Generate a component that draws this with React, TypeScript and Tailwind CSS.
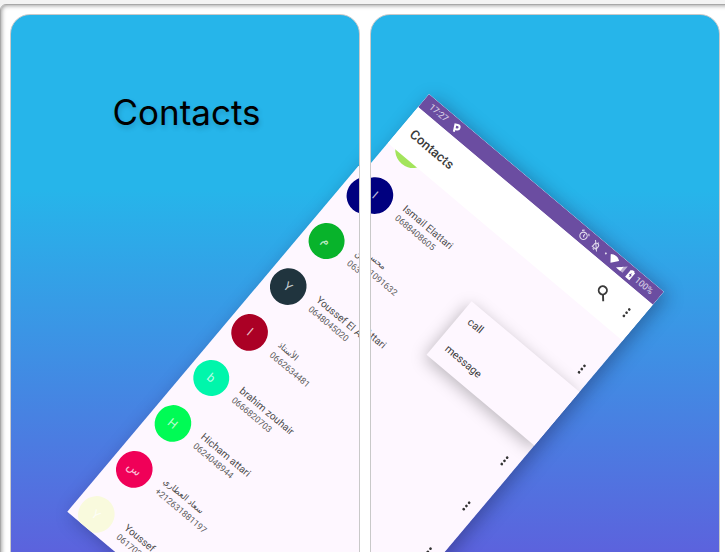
import React from "react";

type Contact = {
  name: string;
  phone: string;
  letter: string;
  color: string;
  rtl?: boolean;
  menu?: boolean;
};

const contacts: Contact[] = [
  { name: "", phone: "", letter: "", color: "bg-[#a3e45c]" },
  { name: "Ismail Elattari", phone: "0688408605", letter: "I", color: "bg-[#00007f]", menu: true },
  { name: "محسن", phone: "0631091632", letter: "م", color: "bg-[#08b32b]", rtl: true },
  { name: "Youssef El Attari", phone: "0648045020", letter: "Y", color: "bg-[#20343e]", menu: true },
  { name: "الأستاذ", phone: "0662634481", letter: "ا", color: "bg-[#ab0025]", rtl: true, menu: true },
  { name: "brahim zouhair", phone: "0666820703", letter: "b", color: "bg-[#00f6ab]", menu: true },
  { name: "Hicham attari", phone: "0624048944", letter: "H", color: "bg-[#00fb55]", menu: true },
  { name: "سعاد العطاري", phone: "+212631881197", letter: "س", color: "bg-[#f00058]", rtl: true, menu: true },
  { name: "Youssef", phone: "0617023145", letter: "Y", color: "bg-[#f9fadd]", menu: true },
];

function Dots({ className }: { className: string }) {
  return (
    <svg viewBox="0 0 4 12" className={className} fill="currentColor">
      <circle cx="2" cy="1.8" r="1.35" />
      <circle cx="2" cy="6" r="1.35" />
      <circle cx="2" cy="10.2" r="1.35" />
    </svg>
  );
}

function StatusBar() {
  return (
    <div className="relative z-10 flex h-[16.5px] items-center justify-between bg-[#6b4da1] pr-[8.5px] pl-[8.5px] text-[8.8px] leading-none text-white/80">
      <div className="flex items-center">
        <span>17:27</span>
        <svg viewBox="0 0 10 10" className="ml-[8px] size-[10px] -rotate-28" fill="none" stroke="white" strokeWidth="2">
          <path d="M3 9.4V2h2.4a2.3 2.3 0 0 1 0 4.6H3" />
        </svg>
      </div>
      <div className="flex items-center">
        <svg viewBox="0 0 24 24" className="size-[11px]" fill="none" stroke="currentColor" strokeWidth="2.4">
          <circle cx="12" cy="13" r="8" />
          <path d="M12 8v5l3 2M2 6l4-4M22 6l-4-4" />
        </svg>
        <svg viewBox="0 0 24 24" className="ml-[5px] size-[11px]" fill="none" stroke="currentColor" strokeWidth="2.2">
          <path d="M5 18h14M7 18v-7a5 5 0 0 1 10 0v7M12 6V3M10 21h4M3 3l18 18" />
        </svg>
        <span className="ml-[6px] size-[2px] rounded-full bg-white/80" />
        <svg viewBox="0 0 24 24" className="ml-[3px] size-[11px] text-white" fill="currentColor">
          <path d="M0 5C7 -0.5 17 -0.5 24 5L12 20z" />
        </svg>
        <svg viewBox="0 0 24 24" className="ml-[1.5px] size-[10px]">
          <path d="M22 2v20H2z" fill="white" fillOpacity="0.55" />
          <path d="M15 9v13H2z" fill="white" />
        </svg>
        <svg viewBox="0 0 24 24" className="ml-[1px] size-[11px]">
          <path d="M9 1h6v2h3v20H6V3h3z" fill="white" />
          <path d="m13 7-4 7h3v5l4-7h-3z" fill="#6b4da1" />
        </svg>
        <span className="ml-[1px]">100%</span>
      </div>
    </div>
  );
}

function AppBar() {
  return (
    <div className="relative z-10 flex h-[47.5px] items-center bg-white pl-[11.5px] text-[#3a3a3a]">
      <span className="text-[13.2px] leading-none font-medium">Contacts</span>
      <svg viewBox="0 0 16 16" className="mr-[20.8px] ml-auto size-[16px]" fill="none" stroke="currentColor" strokeWidth="1.9">
        <circle cx="6.4" cy="6.2" r="4.1" />
        <path d="m9.2 9.2 4.6 5.2" />
      </svg>
      <Dots className="mr-[13px] h-[12px] w-[4px]" />
    </div>
  );
}

function ContactRow({ contact }: { contact: Contact }) {
  return (
    <div className="flex h-[59.65px] items-center pr-[11.5px] pl-[5.5px]">
      <div
        className={`flex size-[36.8px] shrink-0 items-center justify-center rounded-full text-[12px] leading-none text-white/75 ${contact.color}`}
      >
        {contact.letter}
      </div>
      <div className="ml-[11.8px] flex flex-col items-start pb-[8.5px] whitespace-nowrap">
        <span
          dir={contact.rtl ? "rtl" : "ltr"}
          className={`h-[13px] leading-[13px] text-[#4c4c4c] ${contact.rtl ? "text-[8.6px]" : "text-[10.2px]"}`}
        >
          {contact.name}
        </span>
        <span className="h-[12px] text-[8.8px] leading-[12px] text-[#5c5c5c]">{contact.phone}</span>
      </div>
      {contact.menu && <Dots className="ml-auto h-[12px] w-[4px] text-[#333]" />}
    </div>
  );
}

function Phone({ placement }: { placement: string }) {
  return (
    <div
      className={`absolute top-[94px] h-[546px] w-[307px] origin-top-left rotate-[40.1deg] font-['Roboto','Noto_Sans','DejaVu_Sans',sans-serif] shadow-[6px_0px_18px_rgba(20,20,60,0.36)] ${placement}`}
    >
      <div className="relative h-full overflow-hidden bg-[#fef7ff]">
        <StatusBar />
        <AppBar />
        <div className="-mt-[41.1px]">
          {contacts.map((contact) => (
            <ContactRow key={contact.phone} contact={contact} />
          ))}
        </div>
        <div className="absolute top-[131.3px] left-[165.6px] flex h-[69.3px] w-[142px] flex-col bg-[#fef7ff] pl-[11px] text-[10.8px] text-[#3c3c3c] shadow-[0_4px_16px_rgba(0,0,0,0.26)]">
          <span className="h-[34.6px] leading-[34.6px]">call</span>
          <span className="h-[34.6px] leading-[34.6px]">message</span>
        </div>
      </div>
    </div>
  );
}

function Panel({ children }: { children: React.ReactNode }) {
  return (
    <section className="relative h-[700px] w-[350px] shrink-0 overflow-hidden rounded-[20px] border border-[#c9c9c9] bg-[linear-gradient(180deg,#26b5ea_0px,#26b5ea_175px,#5c62dd_540px)]">
      {children}
    </section>
  );
}

export default function App() {
  return (
    <main className="h-[552px] w-[725px] overflow-hidden bg-[#f3f3f3] pt-[4px]">
      <div className="flex h-[720px] w-[800px] gap-[10px] rounded-[6px] border border-[#a8a8a8] bg-white pt-[9px] pl-[9px] shadow-[inset_0_0_5px_rgba(0,0,0,0.5)]">
        <Panel>
          <h1 className="mt-[75px] ml-[101.5px] font-['Inter','Roboto',sans-serif] text-[35px] leading-[44px] text-black [text-shadow:1px_3px_5px_rgba(0,0,0,0.17)]">
            Contacts
          </h1>
          <Phone placement="left-[407.5px] -mt-[15px]" />
        </Panel>
        <Panel>
          <Phone placement="left-[58px] -mt-[15px]" />
        </Panel>
      </div>
    </main>
  );
}
